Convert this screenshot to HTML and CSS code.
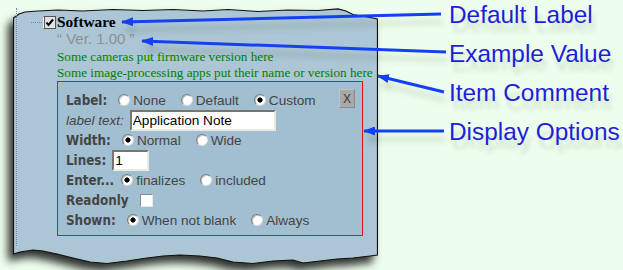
FILE: index.html
```html
<!DOCTYPE html>
<html lang="en">
<head>
    <meta charset="UTF-8">
    <title>Field options</title>
    <link rel="stylesheet" href="styles.css">
</head>
<body>
    <div class="stage">
        <div class="sheet">
            <svg class="sheet-bg" width="365" height="258" viewBox="0 0 365 258">
                <path d="M0.5,10 L6,6 L12,4 L25,3 L45,2 L70,3 L100,1.5 L130,2.5 L160,1.5 L190,3 L215,1.5 L245,3.5 L275,2 L305,2.5 L325,0.8 L333,3 L340,6.5 L352,8.5 L364.5,11
                         L364.5,247 L357,248 L340,250 L324,251 L307,253 L290,255 L280,252 L260,253 L240,255.5 L220,254 L204,250 L187,248 L167,247 L150,248 L134,250 L114,253 L94,255.5 L77,254 L60,250 L44,246 L30,243 L20,242 L7,244 L0.5,246 Z"/>
            </svg>
            <div class="tree">
                <div class="item-head">
                    <span class="twig"></span>
                    <input type="checkbox" class="tick" checked>
                    <span class="item-name">Software</span>
                </div>
                <div class="item-body">
                    <div class="example">“ Ver. 1.00 ”</div>
                    <div class="comment">Some cameras put firmware version here<br>Some image-processing apps put their name or version here</div>

                    <div class="options">
                        <div class="opt-row">
                            <span class="lbl">Label:</span>
                            <label class="opt"><input type="radio" name="label">None</label>
                            <label class="opt"><input type="radio" name="label">Default</label>
                            <label class="opt"><input type="radio" name="label" checked>Custom</label>
                            <button class="close">X</button>
                        </div>
                        <div class="opt-row">
                            <span class="lbl-note">label text:</span>
                            <input type="text" class="field field-wide" value="Application Note">
                        </div>
                        <div class="opt-row">
                            <span class="lbl">Width:</span>
                            <label class="opt"><input type="radio" name="width" checked>Normal</label>
                            <label class="opt"><input type="radio" name="width">Wide</label>
                        </div>
                        <div class="opt-row">
                            <span class="lbl lbl-tight">Lines:</span>
                            <input type="text" class="field field-short" value="1">
                        </div>
                        <div class="opt-row">
                            <span class="lbl lbl-enter">Enter...</span>
                            <label class="opt"><input type="radio" name="enter" checked>finalizes</label>
                            <label class="opt"><input type="radio" name="enter">included</label>
                        </div>
                        <div class="opt-row">
                            <span class="lbl">Readonly</span>
                            <input type="checkbox" class="box">
                        </div>
                        <div class="opt-row">
                            <span class="lbl">Shown:</span>
                            <label class="opt"><input type="radio" name="shown" checked>When not blank</label>
                            <label class="opt"><input type="radio" name="shown">Always</label>
                        </div>
                    </div>
                </div>
            </div>
        </div>

        <!-- callout arrows drawn over the panel -->
        <svg class="arrows" width="623" height="270">
            <defs>
                <marker id="head" markerWidth="12" markerHeight="9" refX="11" refY="4.5" orient="auto" markerUnits="userSpaceOnUse">
                    <path d="M0,0 L12,4.5 L0,9 Z" fill="#1440f4"/>
                </marker>
            </defs>
            <g stroke="#1440f4" stroke-width="3" marker-end="url(#head)">
                <line x1="441" y1="14" x2="122" y2="22"/>
                <line x1="446" y1="52" x2="142" y2="41"/>
                <line x1="444" y1="92" x2="378" y2="76"/>
                <line x1="444" y1="131" x2="364" y2="131"/>
            </g>
        </svg>

        <ul class="callouts">
            <li>Default Label</li>
            <li>Example Value</li>
            <li>Item Comment</li>
            <li>Display Options</li>
        </ul>
    </div>
</body>
</html>
```

FILE: styles.css
```css
body {
    margin: 0;
    background-color: #eefeee;
    font-family: "Liberation Sans", Arial, sans-serif;
}
.stage {
    position: relative;
    width: 623px;
    height: 270px;
    padding-top: 2px;
    box-sizing: border-box;
    overflow: hidden;
}
.sheet {
    position: relative;
    width: 365px;
    height: 258px;
    margin-left: 13px;
}
.sheet-bg {
    position: absolute;
    top: 0;
    left: 0;
    filter: drop-shadow(-5px 7px 4px rgba(0, 0, 0, 0.8));
}
.sheet-bg path {
    fill: #adc6d5;
    stroke: #111;
    stroke-width: 1.2;
}
.tree {
    position: relative;
    margin: 6px 0 0 3px;
    height: 238px;
    padding: 6px 0 0 14px;
    border-left: 1px dotted #76889a;
    box-sizing: border-box;
}
.item-head {
    display: flex;
    align-items: center;
    height: 16px;
}
.twig {
    width: 11px;
    border-top: 1px dotted #76889a;
}
.tick {
    appearance: none;
    width: 13px;
    height: 13px;
    margin: 0 1px 0 1px;
    border: 1px solid #555;
    border-left-color: #f4f4f4;
    box-shadow: inset 1px 0 0 #555;
    background: #e2e2e2 url("data:image/svg+xml,%3Csvg xmlns='http://www.w3.org/2000/svg' width='11' height='11'%3E%3Cpath d='M2.5 5.5 L4.5 8 L9 2.5' fill='none' stroke='%23000' stroke-width='2'/%3E%3C/svg%3E") center / 11px 11px no-repeat;
}
.item-name {
    font: bold 15.4px/16px "Liberation Serif", "Times New Roman", serif;
    color: #000;
}
.item-body {
    padding-left: 26px;
}
.example {
    margin-top: 1px;
    font-size: 15px;
    line-height: 16px;
    color: #8b9196;
}
.comment {
    margin-top: 2px;
    font: 13.2px/16px "Liberation Serif", "Times New Roman", serif;
    color: #008000;
    white-space: nowrap;
}
.options {
    width: 306px;
    height: 155px;
    padding: 8px 7px 4px 8px;
    box-sizing: border-box;
    border: 1px solid #e8101a;
    background-color: #a1bfd0;
}
.opt-row {
    display: flex;
    align-items: center;
    height: 20px;
    color: #454545;
}
.lbl {
    margin-right: 11px;
    font-family: "DejaVu Sans Condensed", "DejaVu Sans", sans-serif;
    font-stretch: condensed;
    font-weight: bold;
    font-size: 13.3px;
}
.lbl-tight {
    margin-right: 6px;
}
.lbl-enter {
    margin-right: 7px;
}
.lbl-note {
    margin-right: 6px;
    font-style: italic;
    font-size: 13.5px;
}
.opt {
    display: flex;
    align-items: center;
    gap: 3px;
    margin-right: 15px;
    font-size: 13.6px;
}
.opt input {
    appearance: none;
    width: 12px;
    height: 12px;
    margin: 0;
    border-radius: 50%;
    border: 1px solid;
    border-color: #7d7d7d #dcdcdc #dcdcdc #7d7d7d;
    background: #fff;
    box-shadow: inset 1px 1px 0 #c4c4c4;
}
.opt input:checked {
    background: radial-gradient(circle, #000 0 2.3px, #fff 2.9px);
}
.box {
    appearance: none;
    width: 13px;
    height: 13px;
    margin: 0;
    border: 1px solid;
    border-color: #8a8a8a #e6e6e6 #e6e6e6 #8a8a8a;
    background: #fff;
}
.field {
    height: 21px;
    padding: 0 1px;
    box-sizing: border-box;
    border: 2px solid;
    border-color: #7b7468 #ebeae2 #ebeae2 #7b7468;
    background: #fff;
    color: #000;
    font-family: "Liberation Sans", Arial, sans-serif;
    font-size: 13.6px;
}
.field-wide {
    width: 146px;
}
.field-short {
    width: 37px;
}
.close {
    align-self: flex-start;
    margin: -1px 0 0 auto;
    width: 16px;
    height: 19px;
    padding: 0;
    border: 1px solid;
    border-color: #c2c2c2 #8c8c8c #8c8c8c #c2c2c2;
    background-color: #a9a9a9;
    color: #3a3a3a;
    font-family: "Liberation Sans", Arial, sans-serif;
    font-size: 12px;
}
.arrows {
    position: absolute;
    top: 0;
    left: 0;
    filter: drop-shadow(2px 8px 3px rgba(0, 40, 0, 0.18));
}
.callouts {
    position: absolute;
    top: -5px;
    left: 449px;
    margin: 0;
    padding: 0;
    list-style: none;
}
.callouts li {
    line-height: 39px;
    font-size: 24.4px;
    color: #1f1fd6;
    white-space: nowrap;
    text-shadow: 3px 9px 4px rgba(0, 50, 0, 0.15);
}
```
